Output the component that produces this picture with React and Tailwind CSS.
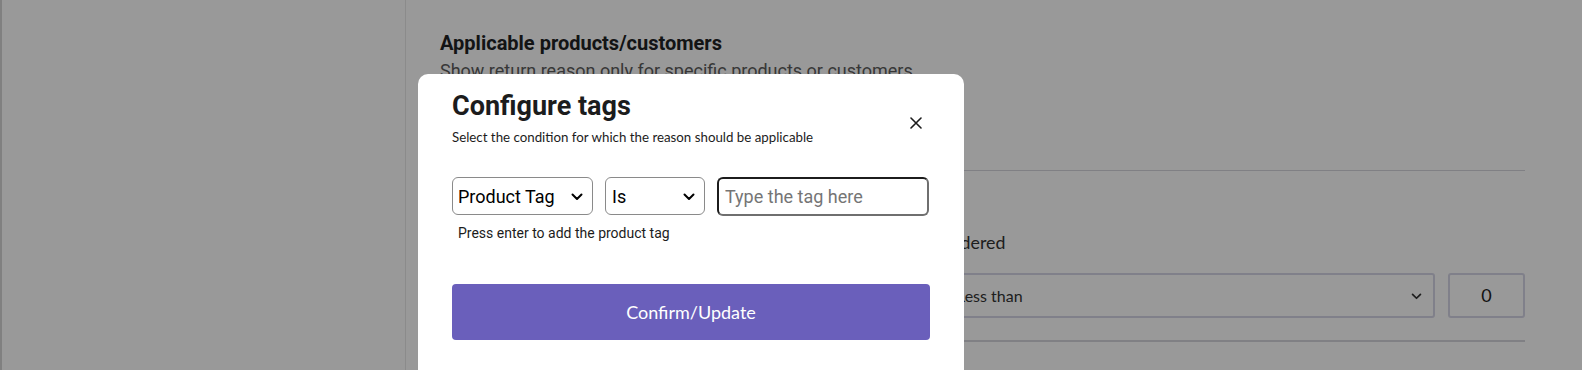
import { useState } from "react";

function Chevron({ className = "" }) {
  return (
    <svg viewBox="0 0 12 8" className={className} fill="none" stroke="currentColor" strokeWidth="2" strokeLinecap="round" strokeLinejoin="round">
      <path d="M1.5 1.5 6 6l4.5-4.5" />
    </svg>
  );
}

function SelectBox({ value, className = "" }) {
  return (
    <div className={`relative h-[38px] rounded-[6px] border border-[#8a8a8a] bg-white ${className}`}>
      <div className="flex h-full items-center pl-[5px] text-[18px] text-black">{value}</div>
      <Chevron className="absolute right-[9px] top-[15px] h-[8px] w-[12px] text-black" />
    </div>
  );
}

export default function App() {
  const [tag, setTag] = useState("");

  return (
    <div className="relative h-[370px] w-full overflow-hidden bg-white" style={{ fontFamily: "Roboto, sans-serif" }}>
      {/* page behind the dialog */}
      <div className="flex h-full">
        <div className="w-[406px] shrink-0 border-l-2 border-r border-l-[#d6d6d6] border-r-[#e8e8e8]" />
        <div className="flex-1 pl-[34px] pr-[57px] pt-[31px]">
          <h2 className="text-[20px] font-bold leading-[24px] text-[#202223]">Applicable products/customers</h2>
          <p className="mt-[5px] text-[18px] leading-[22px] text-[#5c5c5c]">Show return reason only for specific products or customers</p>
          <div className="mt-[88px] border-t border-[#d5d5dc]" />
          <p className="mt-[60px] whitespace-nowrap text-[17.8px] leading-[22px] text-[#333]" style={{ fontFamily: "Lato, sans-serif" }}>
            Show return reason only when the quantity of the product being ordered
          </p>
          <div className="mt-[20px] flex gap-[13px]">
            <div className="h-[45px] w-[492px] rounded-[3px] border-2 border-[#d6d6e6]" />
            <div className="relative flex h-[45px] flex-1 items-center rounded-[3px] border-2 border-[#d6d6e6] pl-[10px] text-[16px] text-[#333]" style={{ fontFamily: "Lato, sans-serif" }}>
              Less than
              <Chevron className="absolute right-[11px] top-[18px] h-[7px] w-[11px] text-[#333]" />
            </div>
            <div className="flex h-[45px] w-[77px] items-center justify-center rounded-[3px] border-2 border-[#d6d6e6] text-[18px] text-[#222]" style={{ fontFamily: "Lato, sans-serif" }}>
              0
            </div>
          </div>
          <div className="mt-[22px] border-t-2 border-[#d5d5dc]" />
        </div>
      </div>

      {/* overlay */}
      <div className="absolute inset-0 bg-black/40" />

      {/* dialog */}
      <div className="absolute left-[418px] top-[74px] w-[546px] rounded-[10px] bg-white px-[34px] pb-[40px] pt-[17px]">
        <div className="flex items-start justify-between">
          <div>
            <h1 className="text-[27px] font-bold leading-[31px] text-[#1c1c1c]">Configure tags</h1>
            <p className="mt-[7px] text-[13.3px] leading-[17px] text-[#1c1c1c]" style={{ fontFamily: "Lato, sans-serif" }}>
              Select the condition for which the reason should be applicable
            </p>
          </div>
          <button className="mr-[8px] mt-[26px] text-[#1c1c1c]" aria-label="Close">
            <svg viewBox="0 0 12 12" className="h-[12px] w-[12px]" fill="none" stroke="currentColor" strokeWidth="1.6" strokeLinecap="round">
              <path d="M1 1l10 10M11 1 1 11" />
            </svg>
          </button>
        </div>

        <div className="mt-[31px] flex gap-[12px]">
          <SelectBox value="Product Tag" className="w-[141px]" />
          <SelectBox value="Is" className="w-[100px] pl-[1px]" />
          <input
            value={tag}
            onChange={(e) => setTag(e.target.value)}
            placeholder="Type the tag here"
            className="h-[39px] w-[212px] rounded-[6px] border-2 border-[#1c1c1c] border-b-[#6f6f6f] border-r-[#6f6f6f] px-[6px] text-[18px] text-black outline-none placeholder:text-[#757575]"
          />
        </div>
        <p className="mt-[9px] pl-[6px] text-[14px] leading-[16px] text-[#1c1c1c]">Press enter to add the product tag</p>

        <button
          className="mt-[43px] flex h-[56px] w-full items-center justify-center rounded-[4px] bg-[#6a5fbb] text-[18px] text-white"
          style={{ fontFamily: "Lato, sans-serif" }}
        >
          Confirm/Update
        </button>
      </div>
    </div>
  );
}
